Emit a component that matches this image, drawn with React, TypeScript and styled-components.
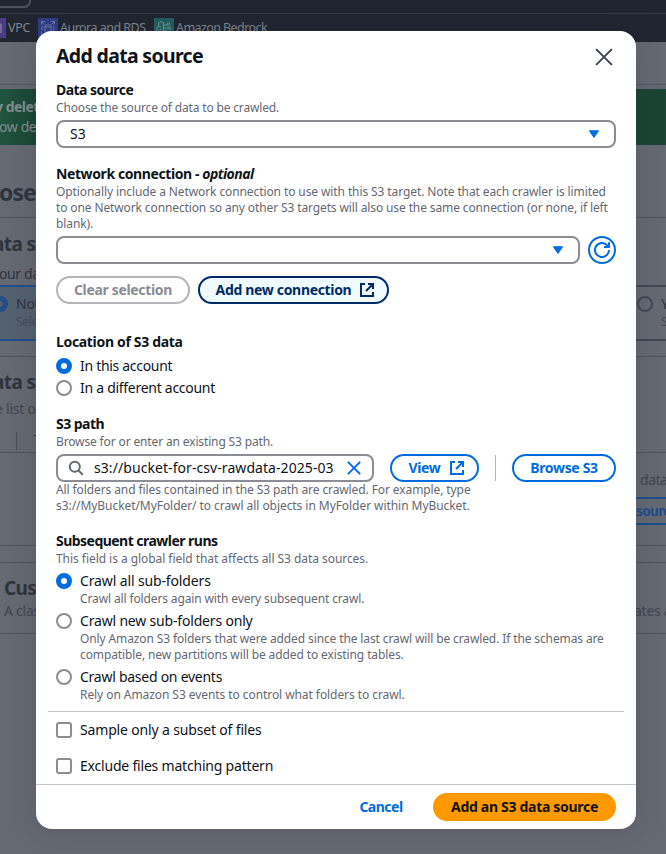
import React from 'react';
import styled, { createGlobalStyle, css } from 'styled-components';

const GlobalStyle = createGlobalStyle`
  * { box-sizing: border-box; }
  body {
    margin: 0;
    overflow: hidden;
    background: #656972;
    color: #0f141a;
    font-family: "Noto Sans", "Open Sans", sans-serif;
    font-size: 14px;
    line-height: 20px;
  }
  button, p, h1, h2 { margin: 0; padding: 0; font: inherit; }
`;

/* ---------- console page beneath the dialog ---------- */

const Page = styled.div`
  position: relative;
  width: 666px;
  height: 854px;
  overflow: hidden;
  background: #656972;
`;

const TopNav = styled.header`
  height: 42px;
  background: #202530;
`;

const SearchStrip = styled.div`
  height: 14px;
  border-bottom: 1px solid #343944;
`;

const SearchBox = styled.div`
  width: 31px;
  height: 8px;
  border: solid #4c515b;
  border-width: 0 2px 2px 0;
  border-radius: 0 0 7px 0;
`;

const Favorites = styled.div`
  display: flex;
  height: 28px;
  padding-top: 4px;
  font-size: 12.5px;
  color: #80858e;
`;

const Favorite = styled.div<{ $width: number; $spacing: number }>`
  display: flex;
  flex: none;
  gap: 2px;
  width: ${(p) => p.$width}px;
  letter-spacing: ${(p) => p.$spacing}px;
  white-space: nowrap;
`;

const ServiceTile = styled.span<{ $color: string; $shift?: number }>`
  display: block;
  flex: none;
  width: 20px;
  height: 20px;
  margin-left: ${(p) => p.$shift ?? 0}px;
  background: ${(p) => p.$color};
  svg { display: block; }
`;

const Breadcrumbs = styled.div`
  height: 43px;
  margin-bottom: 4px;
  border-bottom: 1px solid #535562;
`;

const Flash = styled.div`
  height: 56px;
  padding-top: 8px;
  background: linear-gradient(90deg, #215540 0, #1b4534 36px, #1b4434 100%);
`;

const Band = styled.section<{ $height: number; $line?: boolean }>`
  display: grid;
  grid-template-columns: 36px 1fr 30px;
  height: ${(p) => p.$height}px;
  border-bottom: ${(p) => (p.$line ? '1px solid #4f535e' : '0')};
`;

const Edge = styled.div<{ $top?: number; $inset?: number }>`
  min-width: 0;
  height: 100%;
  overflow: hidden;
  padding-top: ${(p) => p.$top ?? 0}px;
  padding-left: ${(p) => p.$inset ?? 0}px;
  white-space: nowrap;
`;

const EdgeRight = styled(Edge)`
  grid-column: 3;
`;

const Dim = styled.div<{ $size?: number; $bold?: boolean; $color?: string; $shift?: number; $line?: number; $spacing?: number; $top?: number }>`
  margin-top: ${(p) => p.$top ?? 0}px;
  margin-left: ${(p) => p.$shift ?? 0}px;
  color: ${(p) => p.$color ?? '#2e343e'};
  font-size: ${(p) => p.$size ?? 14}px;
  font-weight: ${(p) => (p.$bold ? 700 : 400)};
  line-height: ${(p) => p.$line ?? 20}px;
  letter-spacing: ${(p) => p.$spacing ?? -0.25}px;
  white-space: nowrap;
`;

const TileEdge = styled.div<{ $active?: boolean }>`
  display: flex;
  gap: 8px;
  height: 56px;
  padding-top: 8px;
  overflow: hidden;
  border: solid ${(p) => (p.$active ? '#1f4d8d' : '#434753')};
  border-width: 2px 0;
  background: ${(p) => (p.$active ? '#54616f' : 'transparent')};
`;

const DimRadio = styled.span<{ $active?: boolean }>`
  flex: none;
  width: 16px;
  height: 16px;
  margin: 1px 0 0 ${(p) => (p.$active ? -8 : 1)}px;
  border: ${(p) => (p.$active ? '5px solid #1f4d8d' : '2px solid #434753')};
  border-radius: 50%;
`;

const TileText = styled.div`
  margin-top: -1px;
`;

const ToolbarEdge = styled.div`
  display: flex;
  align-items: flex-start;
  height: 18px;
  margin-top: 9px;
  padding-left: 16px;
  gap: 17px;
`;

const ToolbarRule = styled.span`
  flex: none;
  width: 1px;
  height: 18px;
  background: #4a4e59;
`;

const GhostButton = styled.div`
  height: 28px;
  margin-top: 7px;
  overflow: hidden;
  border: solid #1f4d8d;
  border-width: 2px 0;
  color: #1f4d8d;
  font-size: 13.5px;
  font-weight: 700;
  line-height: 24px;
  letter-spacing: -0.6px;
`;

/* ---------- dialog ---------- */

const Backdrop = styled.div`
  position: absolute;
  inset: 0;
  display: flex;
  align-items: flex-start;
  padding: 31px 0 0 36px;
`;

const Dialog = styled.div`
  display: flex;
  flex: none;
  flex-direction: column;
  width: 600px;
  height: 798px;
  overflow: hidden;
  border-radius: 16px;
  background: #fff;
  box-shadow: 0 0 28px 2px rgba(30, 36, 48, 0.16);
`;

const DialogHeader = styled.header`
  display: flex;
  justify-content: space-between;
  align-items: center;
  height: 49px;
  padding: 2px 23px 0 20px;
`;

const Title = styled.h1`
  margin-bottom: 2px;
  font-size: 19.5px;
  font-weight: 700;
  letter-spacing: -0.68px;
`;

const DialogBody = styled.div`
  flex: 1;
  padding: 0 20px;
`;

const Field = styled.section<{ $gap: number }>`
  margin-bottom: ${(p) => p.$gap}px;
`;

const Label = styled.h2<{ $spacing?: number }>`
  font-size: 14px;
  font-weight: 700;
  line-height: 20px;
  letter-spacing: ${(p) => p.$spacing ?? -0.53}px;
  em { letter-spacing: -0.55px; }
`;

const Hint = styled.p<{ $spacing?: number; $indent?: boolean }>`
  padding-left: ${(p) => (p.$indent ? 24 : 0)}px;
  color: #656871;
  font-size: 12px;
  line-height: 16px;
  letter-spacing: ${(p) => p.$spacing ?? -0.09}px;
  white-space: nowrap;
`;

const Row = styled.div<{ $gap?: number; $top?: number }>`
  display: flex;
  align-items: center;
  gap: ${(p) => p.$gap ?? 8}px;
  margin-top: ${(p) => p.$top ?? 4}px;
`;

const control = css`
  display: flex;
  align-items: center;
  height: 28px;
  border: 2px solid #8c8c94;
  border-radius: 8px;
  background: #fff;
`;

const Select = styled.div`
  ${control}
  flex: 1;
  justify-content: space-between;
  padding: 0 15px 0 12px;
`;

const SearchInput = styled.div`
  ${control}
  flex: none;
  width: 318px;
  padding: 0 11px 0 10px;
  span { flex: 1; margin-left: 10px; letter-spacing: 0.07px; white-space: nowrap; }
`;

type Tone = 'normal' | 'disabled' | 'hover' | 'primary' | 'link';

const tones: Record<Tone, ReturnType<typeof css>> = {
  normal: css`border-color: #006ce0; color: #006ce0; background: #fff;`,
  disabled: css`border-color: #b4b4bb; color: #8c8c94; background: #fff;`,
  hover: css`border-color: #002b66; color: #002b66; background: #f0fbff;`,
  primary: css`border-color: #ff9900; color: #0f141a; background: #ff9900;`,
  link: css`border-color: transparent; color: #006ce0; background: transparent;`,
};

const Button = styled.button<{ $tone: Tone; $width: number; $spacing?: number; $icon?: boolean }>`
  display: flex;
  flex: none;
  align-items: center;
  justify-content: center;
  gap: 8px;
  width: ${(p) => p.$width}px;
  height: 28px;
  padding-left: ${(p) => (p.$icon ? 4 : 0)}px;
  border: 2px solid;
  border-radius: 20px;
  font-size: 14px;
  font-weight: 700;
  letter-spacing: ${(p) => p.$spacing ?? -0.33}px;
  white-space: nowrap;
  ${(p) => tones[p.$tone]}
`;

const RoundButton = styled(Button)`
  border-radius: 50%;
`;

const Rule = styled.span`
  flex: none;
  width: 1px;
  height: 26px;
  background: #b6b6be;
`;

const Choice = styled.div<{ $top: number; $spacing?: number }>`
  display: flex;
  align-items: center;
  gap: 8px;
  height: 20px;
  margin-top: ${(p) => p.$top}px;
  letter-spacing: ${(p) => p.$spacing ?? -0.2}px;
`;

const Radio = styled.span<{ $checked?: boolean }>`
  width: 16px;
  height: 16px;
  border: ${(p) => (p.$checked ? '5px solid #006ce0' : '2px solid #8c8c94')};
  border-radius: 50%;
`;

const Checkbox = styled.span`
  width: 16px;
  height: 16px;
  border: 2px solid #8c8c94;
  border-radius: 3px;
`;

const Divider = styled.div`
  height: 1px;
  margin: 8px -8px 0;
  background: #c6c6cd;
`;

const DialogFooter = styled.footer`
  display: flex;
  align-items: center;
  justify-content: flex-end;
  gap: 10px;
  height: 45px;
  padding-right: 20px;
  border-top: 1px solid #c6c6cd;
`;

/* ---------- icons ---------- */

const Caret = () => (
  <svg width="10" height="8" viewBox="0 0 10 8">
    <path d="M0.7 0.8h8.6L5 7.2z" fill="#006ce0" stroke="#006ce0" strokeWidth="1.2" strokeLinejoin="round" />
  </svg>
);

const CloseIcon = ({ size, color, width }: { size: number; color: string; width: number }) => (
  <svg width={size} height={size} viewBox="0 0 16 16" fill="none" stroke={color} strokeWidth={width}>
    <path d="M1 1l14 14M15 1L1 15" />
  </svg>
);

const ExternalIcon = () => (
  <svg width="16" height="16" viewBox="0 0 16 16" fill="none" stroke="currentColor" strokeWidth="2">
    <path d="M6 2H2v12h12v-4M9 2h5v5M14 2L7 9" />
  </svg>
);

const RefreshIcon = () => (
  <svg width="16" height="16" viewBox="0 0 16 16" fill="none" stroke="currentColor" strokeWidth="2">
    <path d="M15 8a7 7 0 1 1-2-4.9l1.6 1.7M15 0.2V5h-5" />
  </svg>
);

const SearchIcon = () => (
  <svg width="16" height="16" viewBox="0 0 16 16" fill="none" stroke="#656871" strokeWidth="2">
    <circle cx="6.8" cy="6.8" r="5" />
    <path d="M10.4 10.4L14.8 14.8" />
  </svg>
);

const VpcGlyph = () => (
  <svg width="20" height="20" viewBox="0 0 20 20" fill="none" stroke="#8d84a6" strokeWidth="1.2">
    <path d="M7 15V7.5l4-3 4 2V15M11 9v6M7 9h8" />
  </svg>
);

const AuroraGlyph = () => (
  <svg width="20" height="20" viewBox="0 0 20 20" fill="none" stroke="#7279a8" strokeWidth="1">
    <path d="M3.5 6.5v-3h3M3.5 3.5l3 3M13.5 3.5h3v3M16.5 3.5l-3 3M3.5 13.5v3h3M16.5 13.5v3h-3" />
    <ellipse cx="10" cy="8" rx="3" ry="1.2" />
    <path d="M7 8v5c0 1.6 6 1.6 6 0V8M5 8c-1.4 1.5-1.4 3 0 4.5M15 8c1.4 1.5 1.4 3 0 4.5" />
  </svg>
);

const BedrockGlyph = () => (
  <svg width="20" height="20" viewBox="0 0 20 20" fill="none" stroke="#6f9592" strokeWidth="1">
    <path d="M9.5 4.5L7 3.5 4.5 5v3L3 9.5v3L5 14v1.5l2.5 1 2-1.5zM4.5 8L7 9M5 12l2.500-1M9.500 7h4M9.500 10h5M9.500 13h4v1.500" />
    <circle cx="14.5" cy="6" r="1.2" />
    <circle cx="15.7" cy="10" r="1.2" />
    <circle cx="13.5" cy="15.5" r="1.2" />
  </svg>
);

const ConsolePage = () => (
  <>
    <TopNav>
      <SearchStrip><SearchBox /></SearchStrip>
      <Favorites>
        <Favorite $width={38} $spacing={-0.3}>
          <ServiceTile $color="#4c3a86" $shift={-14}><VpcGlyph /></ServiceTile>VPC
        </Favorite>
        <Favorite $width={116} $spacing={-0.52}>
          <ServiceTile $color="#303e86"><AuroraGlyph /></ServiceTile>Aurora and RDS
        </Favorite>
        <Favorite $width={130} $spacing={-0.58}>
          <ServiceTile $color="#225f60"><BedrockGlyph /></ServiceTile>Amazon Bedrock
        </Favorite>
      </Favorites>
    </TopNav>
    <Breadcrumbs />
    <Flash>
      <Dim $bold $color="#828d8c" $shift={-5} $spacing={-0.5}>y delet</Dim>
      <Dim $color="#828d8c" $shift={-1} $spacing={-0.4}>ow de</Dim>
    </Flash>
    <Band $height={73} $line>
      <Edge $top={32}><Dim $size={23} $bold $line={30} $shift={-1} $spacing={-0.9}>ose</Dim></Edge>
    </Band>
    <Band $height={67}>
      <Edge $top={15}>
        <Dim $size={19} $bold $line={22} $shift={-7} $spacing={-0.6}>ata s</Dim>
        <Dim $shift={-1} $top={9} $spacing={-0.4}>our da</Dim>
      </Edge>
    </Band>
    <Band $height={72} $line>
      <TileEdge $active>
        <DimRadio $active />
        <TileText>
          <Dim>Not</Dim>
          <Dim $size={12} $line={16} $color="#454a55">Sele</Dim>
        </TileText>
      </TileEdge>
      <EdgeRight>
        <TileEdge>
          <DimRadio />
          <TileText>
            <Dim>Y</Dim>
            <Dim $size={12} $line={16} $color="#454a55">S</Dim>
          </TileText>
        </TileEdge>
      </EdgeRight>
    </Band>
    <Band $height={96} $line>
      <Edge $top={13}>
        <Dim $size={19} $bold $line={24} $shift={-7} $spacing={-0.6}>ata s</Dim>
        <Dim $line={29} $shift={-5} $color="#41464f">e list o</Dim>
        <ToolbarEdge><ToolbarRule /><Dim $size={12} $line={16}>T</Dim></ToolbarEdge>
      </Edge>
    </Band>
    <Band $height={93} $line>
      <EdgeRight $top={17}>
        <Dim $shift={4} $color="#41464f" $spacing={-0.4}>data</Dim>
        <GhostButton>sourc</GhostButton>
      </EdgeRight>
    </Band>
    <Band $height={17} $line />
    <Band $height={71} $line>
      <Edge $top={13} $inset={4}>
        <Dim $size={19} $bold $line={24} $spacing={-0.6}>Cus</Dim>
        <Dim $line={22} $color="#41464f">A clas</Dim>
      </Edge>
      <EdgeRight $top={37}><Dim $line={22} $color="#41464f" $shift={-2}>ates a</Dim></EdgeRight>
    </Band>
  </>
);

export default function App() {
  return (
    <Page>
      <GlobalStyle />
      <ConsolePage />
      <Backdrop>
        <Dialog role="dialog" aria-label="Add data source">
          <DialogHeader>
            <Title>Add data source</Title>
            <CloseIcon size={18} color="#424650" width={1.8} />
          </DialogHeader>
          <DialogBody>
            <Field $gap={16}>
              <Label>Data source</Label>
              <Hint $spacing={-0.16}>Choose the source of data to be crawled.</Hint>
              <Row><Select>S3<Caret /></Select></Row>
            </Field>
            <Field $gap={28}>
              <Label $spacing={-0.4}>Network connection - <em>optional</em></Label>
              <Hint $spacing={-0.1}>Optionally include a Network connection to use with this S3 target. Note that each crawler is limited</Hint>
              <Hint $spacing={-0.12}>to one Network connection so any other S3 targets will also use the same connection (or none, if left</Hint>
              <Hint>blank).</Hint>
              <Row>
                <Select><span /><Caret /></Select>
                <RoundButton $tone="normal" $width={28} aria-label="Refresh"><RefreshIcon /></RoundButton>
              </Row>
              <Row $top={12}>
                <Button $tone="disabled" $width={134}>Clear selection</Button>
                <Button $tone="hover" $width={191} $icon>Add new connection<ExternalIcon /></Button>
              </Row>
            </Field>
            <Field $gap={16}>
              <Label $spacing={-0.33}>Location of S3 data</Label>
              <Choice $top={4} $spacing={-0.3}><Radio $checked />In this account</Choice>
              <Choice $top={2} $spacing={-0.28}><Radio />In a different account</Choice>
            </Field>
            <Field $gap={17}>
              <Label>S3 path</Label>
              <Hint $spacing={-0.14}>Browse for or enter an existing S3 path.</Hint>
              <Row $gap={16}>
                <SearchInput>
                  <SearchIcon />
                  <span>s3://bucket-for-csv-rawdata-2025-03</span>
                  <CloseIcon size={14} color="#006ce0" width={2.2} />
                </SearchInput>
                <Button $tone="normal" $width={89} $icon>View<ExternalIcon /></Button>
                <Rule />
                <Button $tone="normal" $width={104}>Browse S3</Button>
              </Row>
              <Hint $spacing={-0.1}>All folders and files contained in the S3 path are crawled. For example, type</Hint>
              <Hint $spacing={-0.06}>s3://MyBucket/MyFolder/ to crawl all objects in MyFolder within MyBucket.</Hint>
            </Field>
            <Field $gap={0}>
              <Label>Subsequent crawler runs</Label>
              <Hint $spacing={-0.05}>This field is a global field that affects all S3 data sources.</Hint>
              <Choice $top={4} $spacing={-0.13}><Radio $checked />Crawl all sub-folders</Choice>
              <Hint $indent $spacing={-0.13}>Crawl all folders again with every subsequent crawl.</Hint>
              <Choice $top={4} $spacing={-0.18}><Radio />Crawl new sub-folders only</Choice>
              <Hint $indent $spacing={-0.12}>Only Amazon S3 folders that were added since the last crawl will be crawled. If the schemas are</Hint>
              <Hint $indent $spacing={-0.11}>compatible, new partitions will be added to existing tables.</Hint>
              <Choice $top={4} $spacing={-0.26}><Radio />Crawl based on events</Choice>
              <Hint $indent $spacing={-0.07}>Rely on Amazon S3 events to control what folders to crawl.</Hint>
            </Field>
            <Divider />
            <Choice $top={8} $spacing={-0.16}><Checkbox />Sample only a subset of files</Choice>
            <Choice $top={16}><Checkbox />Exclude files matching pattern</Choice>
          </DialogBody>
          <DialogFooter>
            <Button $tone="link" $width={84} $spacing={-0.5}>Cancel</Button>
            <Button $tone="primary" $width={183} $spacing={-0.3}>Add an S3 data source</Button>
          </DialogFooter>
        </Dialog>
      </Backdrop>
    </Page>
  );
}
